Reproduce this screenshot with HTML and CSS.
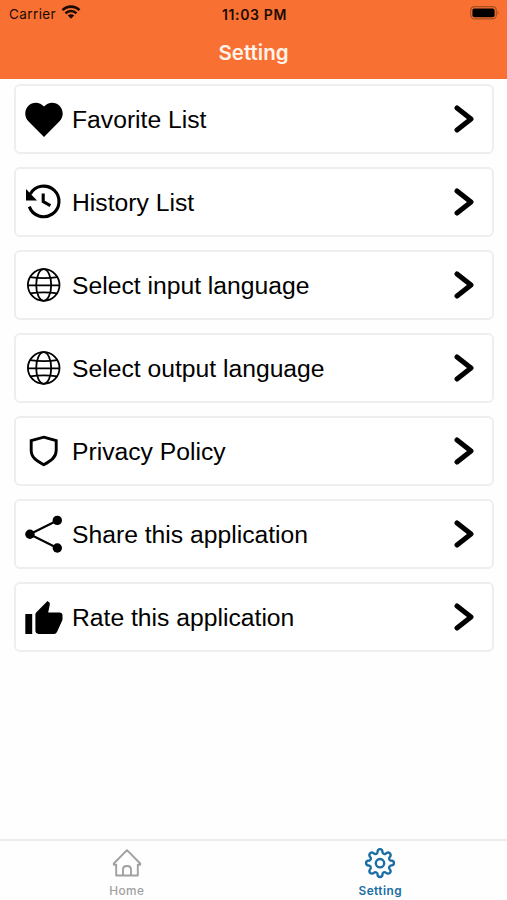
FILE: index.html
```
<!DOCTYPE html>
<html lang="en">
<head>
    <meta charset="UTF-8">
    <meta name="viewport" content="width=device-width, initial-scale=1.0">
    <title>Setting</title>
    <link rel="stylesheet" href="styles.css">
</head>
<body>
    <header class="header">
        <div class="status-bar">
            <div class="carrier">
                <span>Carrier</span>
                <svg class="wifi" width="20" height="14" viewBox="0 0 20 14">
                    <path d="M1.500 5.200a12 12 0 0 1 17 0M4.500 8.300a7.800 7.800 0 0 1 11 0" fill="none" stroke="#1c0b04" stroke-width="2.600"/>
                    <path d="M6.800 10.500a4.600 4.600 0 0 1 6.400 0L10 13.700z" fill="#1c0b04"/>
                </svg>
            </div>
            <div class="time">11:03 PM</div>
            <svg class="battery" width="30" height="14" viewBox="0 0 30 14">
                <rect x=".7" y=".7" width="25.600" height="12.200" rx="3.600" fill="none" stroke="#a94e22" stroke-width="1.200"/>
                <rect x="2.400" y="2.400" width="22.200" height="8.800" rx="2" fill="#000"/>
                <path d="M27.600 4.600q2 2.200 0 4.400z" fill="#a94e22"/>
            </svg>
        </div>
        <h1>Setting</h1>
    </header>

    <main class="list">
        <a class="card">
            <svg class="icon" viewBox="0 0 38 38">
                <path d="M19 37L3.600 21.600C-.8 17.200-.8 10.200 3.200 6C7.700 1.500 14.800 1.700 19 6.600C23.200 1.700 30.300 1.500 34.700 6C38.800 10.200 38.700 17.200 34.300 21.600z"/>
            </svg>
            <span>Favorite List</span>
            <svg class="arrow" viewBox="0 0 20 28"><path d="M3 3l14 11L3 25"/></svg>
        </a>
        <a class="card">
            <svg class="icon" viewBox="0 0 38 38">
                <path class="line" stroke-width="3.100" d="M5.300 11a15.300 15.300 0 1 1-1 12.600M18.200 10.500v8l7.200 4.200"/>
                <path d="M1 6L12 17.500H1z"/>
            </svg>
            <span>History List</span>
            <svg class="arrow" viewBox="0 0 20 28"><path d="M3 3l14 11L3 25"/></svg>
        </a>
        <a class="card">
            <svg class="icon" viewBox="0 0 38 38">
                <g class="line" stroke-width="1.800">
                    <circle cx="18.700" cy="19" r="15.800"/>
                    <ellipse cx="18.700" cy="19" rx="7.500" ry="15.800"/>
                    <path d="M2.900 19.300h31.600M5 11.200q13.700 2 27.400 0M5 27.300q13.700-2 27.400 0"/>
                </g>
            </svg>
            <span>Select input language</span>
            <svg class="arrow" viewBox="0 0 20 28"><path d="M3 3l14 11L3 25"/></svg>
        </a>
        <a class="card">
            <svg class="icon" viewBox="0 0 38 38">
                <g class="line" stroke-width="1.800">
                    <circle cx="18.700" cy="19" r="15.800"/>
                    <ellipse cx="18.700" cy="19" rx="7.500" ry="15.800"/>
                    <path d="M2.900 19.300h31.600M5 11.200q13.700 2 27.400 0M5 27.300q13.700-2 27.400 0"/>
                </g>
            </svg>
            <span>Select output language</span>
            <svg class="arrow" viewBox="0 0 20 28"><path d="M3 3l14 11L3 25"/></svg>
        </a>
        <a class="card">
            <svg class="icon" viewBox="0 0 38 38">
                <path class="line" stroke-width="2.900" d="M18.700 5.200L31.200 8.500V18.500C31.200 25.500 25.500 29 18.700 32.700C12 29 6.200 25.500 6.200 18.500V8.500z"/>
            </svg>
            <span>Privacy Policy</span>
            <svg class="arrow" viewBox="0 0 20 28"><path d="M3 3l14 11L3 25"/></svg>
        </a>
        <a class="card">
            <svg class="icon" viewBox="0 0 38 38">
                <path class="line" stroke-width="2.200" d="M32.300 5.400L4.700 19.300L32.300 33"/>
                <circle cx="32.300" cy="5.400" r="4.700"/>
                <circle cx="4.900" cy="19.300" r="4.700"/>
                <circle cx="32.300" cy="33" r="4.700"/>
            </svg>
            <span>Share this application</span>
            <svg class="arrow" viewBox="0 0 20 28"><path d="M3 3l14 11L3 25"/></svg>
        </a>
        <a class="card">
            <svg class="icon" viewBox="0 0 38 38">
                <path d="M.3 15.900h6.900v20H.3zM10.400 16.600q0-1.400 1-2.400L22.500 2.900l1.800 1.700q.7.800.5 1.800L23.200 14.400H34.500q3 0 3 3v3.800q0 .7-.3 1.400L32 33.900q-.9 2-3 2H13.700q-3.300 0-3.300-3.300z"/>
            </svg>
            <span>Rate this application</span>
            <svg class="arrow" viewBox="0 0 20 28"><path d="M3 3l14 11L3 25"/></svg>
        </a>
    </main>

    <nav class="tabs">
        <a class="tab">
            <svg width="32" height="32" viewBox="0 0 32 32">
                <path d="M2.800 16.500L16 3.200L29.200 16.500V17.800H26.800V28.500H5.200V17.800H2.800zM12 28.500V22.500q0-3.500 4-3.500t4 3.500V28.500" fill="none" stroke="currentColor" stroke-width="1.900" stroke-linejoin="round"/>
            </svg>
            <span>Home</span>
        </a>
        <a class="tab active">
            <svg width="32" height="32" viewBox="0 0 32 32">
                <path d="M13.400 5.800Q13.400 2.200 16 2.200T18.600 5.800Q19.900 7.600 21.400 6.900Q24.100 4.500 25.900 6.300T25.300 10.800Q24.900 13 26.400 13.500Q30 13.500 30 16.100T26.400 18.700Q24.600 19.900 25.300 21.500Q27.700 24.200 25.900 25.900T21.400 25.300Q19.200 24.900 18.600 26.400Q18.600 30 16 30T13.400 26.400Q12.100 24.700 10.600 25.300Q7.900 27.700 6.100 25.900T6.700 21.500Q7.100 19.300 5.600 18.700Q2 18.700 2 16.100T5.600 13.500Q7.400 12.300 6.700 10.800Q4.300 8.100 6.100 6.300T10.600 6.900Q12.800 7.400 13.400 5.800z" fill="none" stroke="currentColor" stroke-width="2.300" stroke-linejoin="round"/>
                <circle cx="16" cy="16.200" r="4.200" fill="none" stroke="currentColor" stroke-width="2.400"/>
            </svg>
            <span>Setting</span>
        </a>
    </nav>
</body>
</html>
```
FILE: styles.css
```
* {
    box-sizing: border-box;
}
body {
    margin: 0;
    height: 900px;
    display: flex;
    flex-direction: column;
    font-family: "Liberation Sans", Arial, sans-serif;
    background: #fefefe;
    color: #000;
    overflow: hidden;
}
.header {
    height: 79px;
    background: #f97132;
    font-family: Inter, sans-serif;
}
.status-bar {
    height: 28px;
    padding: 0 7px 0 9px;
    display: grid;
    grid-template-columns: 1fr auto 1fr;
    align-items: center;
    font-size: 13.5px;
    color: #1c0b04;
}
.carrier {
    display: flex;
    align-items: center;
    gap: 5px;
    letter-spacing: .4px;
}
.wifi {
    margin-top: -4px;
}
.time {
    font-weight: 600;
    font-size: 14px;
    letter-spacing: .65px;
}
.battery {
    justify-self: end;
    margin-top: -2px;
}
.header h1 {
    margin: 11px 0 0;
    font-size: 20.5px;
    line-height: 28px;
    font-weight: 600;
    text-align: center;
    color: #fff4ec;
}
.list {
    flex: 1;
    display: flex;
    flex-direction: column;
    gap: 13px;
    padding: 5px 13px 0 14px;
}
.card {
    height: 70px;
    flex: none;
    display: flex;
    align-items: center;
    padding: 0 18px 0 9px;
    border: 2px solid #eee;
    border-radius: 6px;
    background: #fff;
}
.card span {
    flex: 1;
    margin: 2px 0 0 9px;
    font-size: 24.7px;
    line-height: 30px;
    white-space: nowrap;
}
.icon {
    width: 38px;
    height: 38px;
}
.line {
    fill: none;
    stroke: #000;
}
.arrow {
    width: 20px;
    height: 28px;
    fill: none;
    stroke: #000;
    stroke-width: 5;
    stroke-linecap: round;
    stroke-linejoin: round;
}
.tabs {
    height: 61px;
    display: flex;
    border-top: 2px solid #ececec;
    font-family: Inter, sans-serif;
}
.tab {
    flex: 1;
    display: flex;
    flex-direction: column;
    align-items: center;
    padding-top: 6px;
    font-size: 11.8px;
    line-height: 16px;
    font-weight: 500;
    letter-spacing: .45px;
    color: #a0a0a0;
}
.tab span {
    margin-top: 4px;
}
.active {
    color: #1a6ea3;
}
.active span {
    font-weight: 600;
}
```
